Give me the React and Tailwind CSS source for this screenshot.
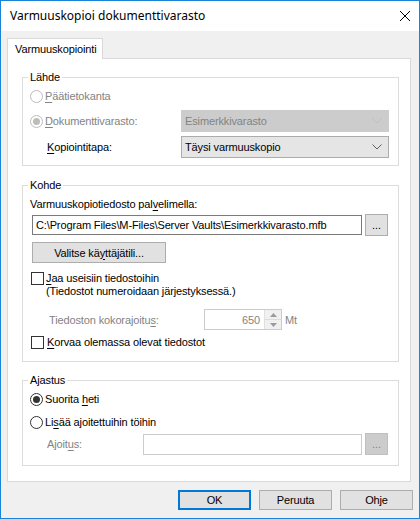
import React from 'react'

const U = ({ children }) => <span className="underline underline-offset-[2px]">{children}</span>

const Radio = ({ checked, disabled }) => (
  <span
    className={`w-[13px] h-[13px] rounded-full border bg-white flex items-center justify-center shrink-0 ${
      disabled ? 'border-[#bcbcbc]' : 'border-[#333333]'
    }`}
  >
    {checked && (
      <span className={`w-[7px] h-[7px] rounded-full ${disabled ? 'bg-[#bcbcbc]' : 'bg-[#333333]'}`} />
    )}
  </span>
)

const Check = () => <span className="block w-[13px] h-[13px] border border-[#333333] bg-white shrink-0" />

const Chevron = ({ disabled }) => (
  <svg width="10" height="6" viewBox="0 0 10 6" className="shrink-0">
    <polyline points="0.5,0.5 5,5 9.5,0.5" fill="none" stroke={disabled ? '#bfbfbf' : '#606060'} strokeWidth="1" />
  </svg>
)

const Combo = ({ value, disabled }) => (
  <div
    className={`ml-auto w-[208px] h-[22px] border flex items-center pl-[3px] pr-[6px] ${
      disabled ? 'bg-[#cccccc] border-[#cccccc] text-[#838383]' : 'bg-[#e5e5e5] border-[#acacac]'
    }`}
  >
    <span className="flex-1">{value}</span>
    <Chevron disabled={disabled} />
  </div>
)

const Group = ({ title, className, children }) => (
  <div className={`relative border border-[#dcdcdc] pl-[7px] pr-[9px] flex flex-col ${className}`}>
    <span className="absolute -top-[9px] left-[5px] bg-white px-[2px] leading-[16px]">{title}</span>
    {children}
  </div>
)

export default function App() {
  return (
    <div className="w-[420px] h-[519px] border border-[#1883d7] flex flex-col bg-[#f0f0f0] text-[11px] leading-[16px] tracking-[-0.13px] text-black font-['Liberation_Sans',Arial,sans-serif]">
      <div className="h-[30px] shrink-0 bg-white flex items-center justify-between pl-[9px] pr-[9px]">
        <span className="text-[12px] tracking-normal font-['Noto_Sans',sans-serif]">Varmuuskopioi dokumenttivarasto</span>
        <svg width="10" height="10" viewBox="0 0 10 10">
          <path d="M0 0 L10 10 M10 0 L0 10" stroke="#000" strokeWidth="1" />
        </svg>
      </div>

      <div className="flex-1 flex flex-col pl-[6px] pr-[8px] pt-[7px]">
        <div className="self-start relative z-10 -mb-px h-[21px] w-[96px] border border-b-0 border-[#d9d9d9] bg-white pl-[7px] flex items-center">
          Varmuuskopiointi
        </div>

        <div className="border border-[#d9d9d9] bg-white pl-[14px] pr-[11px] pt-[18px] pb-[15px] flex flex-col">
          <Group title="Lähde" className="pt-[8px] pb-[7px] gap-[4px]">
            <div className="h-[20px] flex items-center gap-[2px] text-[#838383]">
              <Radio disabled />
              <span><U>P</U>äätietokanta</span>
            </div>
            <div className="h-[22px] flex items-center">
              <div className="flex items-center gap-[2px] text-[#838383]">
                <Radio checked disabled />
                <span><U>D</U>okumenttivarasto:</span>
              </div>
              <Combo value="Esimerkkivarasto" disabled />
            </div>
            <div className="h-[22px] flex items-center">
              <span className="pl-[17px]"><U>K</U>opiointitapa:</span>
              <Combo value="Täysi varmuuskopio" />
            </div>
          </Group>

          <Group title="Kohde" className="mt-[19px] pt-[10px] pb-[11px]">
            <span>Varmuuskopiotiedosto pal<U>v</U>elimella:</span>
            <div className="mt-[2px] h-[22px] flex items-center">
              <div className="ml-[2px] w-[330px] h-[20px] border border-[#7a7a7a] bg-white pl-[3px] flex items-center whitespace-nowrap overflow-hidden">
                C:\Program Files\M-Files\Server Vaults\Esimerkkivarasto.mfb
              </div>
              <div className="ml-[3px] w-[23px] h-[22px] border border-[#adadad] bg-[#e1e1e1] flex items-center justify-center">
                ...
              </div>
            </div>
            <div className="mt-[6px] ml-[2px] w-[134px] h-[21px] border border-[#adadad] bg-[#e1e1e1] flex items-center justify-center">
              <span>Valitse kä<U>y</U>ttäjätili...</span>
            </div>
            <div className="mt-[9px] flex items-start">
              <span className="ml-[1px]"><Check /></span>
              <div className="ml-[2px] flex flex-col leading-[13px]">
                <span><U>J</U>aa useisiin tiedostoihin</span>
                <span>(Tiedostot numeroidaan järjestyksessä.)</span>
              </div>
            </div>
            <div className="mt-[11px] h-[21px] flex items-center">
              <span className="w-[174px] pl-[19px] text-[#838383]">Tiedoston kokorajoitu<U>s</U>:</span>
              <div className="w-[78px] h-[21px] border border-[#cccccc] bg-white flex">
                <span className="flex-1 text-right pr-[4px] text-[#838383] flex items-center justify-end">650</span>
                <div className="w-[17px] flex flex-col bg-[#f0f0f0] border-l border-[#e0e0e0]">
                  <div className="flex-1 flex items-center justify-center border-b border-[#dcdcdc]">
                    <svg width="7" height="4" viewBox="0 0 7 4"><polygon points="3.5,0 7,4 0,4" fill="#9a9a9a" /></svg>
                  </div>
                  <div className="flex-1 flex items-center justify-center">
                    <svg width="7" height="4" viewBox="0 0 7 4"><polygon points="0,0 7,0 3.5,4" fill="#9a9a9a" /></svg>
                  </div>
                </div>
              </div>
              <span className="ml-[3px] text-[#838383]">Mt</span>
            </div>
            <div className="mt-[4px] h-[16px] flex items-center">
              <span className="ml-[1px] flex"><Check /></span>
              <span className="ml-[3px]"><U>K</U>orvaa olemassa olevat tiedostot</span>
            </div>
          </Group>

          <Group title="Ajastus" className="mt-[18px] pt-[10px] pb-[10px]">
            <div className="h-[16px] flex items-center gap-[2px]">
              <Radio checked />
              <span>Suorita <U>h</U>eti</span>
            </div>
            <div className="mt-[7px] h-[16px] flex items-center gap-[2px]">
              <Radio />
              <span>Li<U>s</U>ää ajoitettuihin töihin</span>
            </div>
            <div className="mt-[3px] h-[22px] flex items-center">
              <span className="w-[113px] pl-[17px] text-[#838383]">Ajoit<U>u</U>s:</span>
              <div className="w-[219px] h-[21px] border border-[#cccccc] bg-white" />
              <div className="ml-[3px] w-[23px] h-[22px] border border-[#bfbfbf] bg-[#cccccc] flex items-center justify-center text-[#838383]">
                ...
              </div>
            </div>
          </Group>
        </div>

        <div className="mt-[8px] -mr-[2px] flex justify-end gap-[8px]">
          <div className="w-[73px] h-[20px] border-2 border-[#0078d7] bg-[#e1e1e1] flex items-center justify-center">OK</div>
          <div className="w-[73px] h-[20px] border border-[#adadad] bg-[#e1e1e1] flex items-center justify-center">Peruuta</div>
          <div className="w-[73px] h-[20px] border border-[#adadad] bg-[#e1e1e1] flex items-center justify-center">Ohje</div>
        </div>
      </div>
    </div>
  )
}
